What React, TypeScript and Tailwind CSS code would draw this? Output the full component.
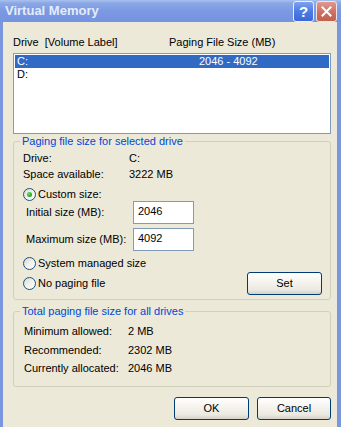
import React from "react";

function Radio({ checked }: { checked?: boolean }) {
  return (
    <span className="flex h-[13px] w-[13px] shrink-0 items-center justify-center rounded-full border border-[#1c5180] bg-[linear-gradient(135deg,#dcd9c8_0%,#f2f1ea_50%,#ffffff_100%)]">
      {checked && (
        <span className="h-[5px] w-[5px] rounded-full bg-[radial-gradient(circle_at_35%_35%,#6ee06a_0%,#21a121_70%,#1a8a1a_100%)]" />
      )}
    </span>
  );
}

function XPButton({ label, w = "w-[75px]" }: { label: string; w?: string }) {
  return (
    <div
      className={`flex h-[23px] ${w} items-center justify-center rounded-[3px] border border-[#003c74] bg-[linear-gradient(180deg,#ffffff_0%,#f5f4ef_40%,#ebe9e0_80%,#d6d0c5_100%)] text-[11px] text-black`}
    >
      {label}
    </div>
  );
}

function Input({ value }: { value: string }) {
  return (
    <div className="flex h-[23px] w-[61px] items-center border border-[#7f9db9] bg-white pb-[2px] pl-[4px] text-[11px] text-black">
      {value}
    </div>
  );
}

export default function App() {
  return (
    <div className="flex h-[427px] w-[341px] flex-col overflow-hidden bg-[#7a96df] font-['Liberation_Sans',Arial,sans-serif] text-[11px] leading-[13px] text-black">
      {/* Title bar */}
      <div className="flex h-[22px] shrink-0 items-center bg-[linear-gradient(180deg,#a9c1ee_0%,#8aa7e6_15%,#7b99e2_50%,#7594df_100%)] pl-[5px] pr-[4px]">
        <span className="text-[13px] font-bold leading-[16px] text-[#e4ecfb]">Virtual Memory</span>
        <div className="ml-auto flex gap-[2px]">
          <div className="flex h-[21px] w-[21px] items-center justify-center rounded-[3px] border border-[#e8eefb] bg-[linear-gradient(180deg,#7fa2ee_0%,#4d7be6_50%,#3c68d8_100%)] text-[15px] font-bold leading-none text-white">
            ?
          </div>
          <div className="flex h-[21px] w-[21px] items-center justify-center rounded-[3px] border border-[#f0e4e2] bg-[linear-gradient(180deg,#e09a8e_0%,#cf7364_50%,#c0604f_100%)]">
            <svg width="11" height="11" viewBox="0 0 11 11">
              <path d="M1.5 1.5 L9.5 9.5 M9.5 1.5 L1.5 9.5" stroke="white" strokeWidth="2" strokeLinecap="square" />
            </svg>
          </div>
        </div>
      </div>

      {/* Client */}
      <div className="ml-[3px] mr-[4px] flex flex-1 flex-col bg-[#ece9d8] pl-[10px] pr-[6px] pt-[14px]">
        {/* List header */}
        <div className="flex h-[13px]">
          <span className="w-[156px] whitespace-pre">Drive  [Volume Label]</span>
          <span>Paging File Size (MB)</span>
        </div>

        {/* Listbox */}
        <div className="mt-[4px] h-[81px] w-[318px] border border-[#7f9db9] bg-white p-[1px]">
          <div className="flex h-[13px] bg-[#316ac5] pl-[2px] text-white">
            <span className="w-[182px]">C:</span>
            <span>2046 - 4092</span>
          </div>
          <div className="flex h-[13px] pl-[2px]">
            <span>D:</span>
          </div>
        </div>

        {/* Group 1 */}
        <fieldset className="mt-[1px] w-[318px] rounded-[3px] border border-[#d0d0bf] pb-[4px] pl-[9px] pr-[8px]">
          <legend className="-ml-[3px] px-[2px] text-[#0046d5]">Paging file size for selected drive</legend>
          <div className="mt-[4px] flex h-[13px] items-center">
            <span className="w-[106px]">Drive:</span>
            <span>C:</span>
          </div>
          <div className="mt-[3px] flex h-[13px] items-center">
            <span className="w-[106px]">Space available:</span>
            <span>3222 MB</span>
          </div>
          <div className="mt-[7px] flex h-[13px] items-center gap-[2px]">
            <Radio checked />
            <span>Custom size:</span>
          </div>
          <div className="flex h-[23px] items-center pl-[3px]">
            <span className="w-[107px]">Initial size (MB):</span>
            <Input value="2046" />
          </div>
          <div className="mt-[4px] flex h-[23px] items-center pl-[3px]">
            <span className="w-[107px]">Maximum size (MB):</span>
            <Input value="4092" />
          </div>
          <div className="mt-[5px] flex h-[14px] items-center gap-[2px]">
            <Radio />
            <span>System managed size</span>
          </div>
          <div className="mt-[2px] flex h-[23px] items-center gap-[2px]">
            <Radio />
            <span>No paging file</span>
            <div className="ml-auto">
              <XPButton label="Set" />
            </div>
          </div>
        </fieldset>

        {/* Group 2 */}
        <fieldset className="mt-[5px] w-[318px] rounded-[3px] border border-[#d0d0bf] pb-[11px] pl-[10px]">
          <legend className="-ml-[4px] px-[2px] text-[#0046d5]">Total paging file size for all drives</legend>
          <div className="mt-[7px] flex h-[13px] items-center">
            <span className="w-[104px]">Minimum allowed:</span>
            <span>2 MB</span>
          </div>
          <div className="mt-[6px] flex h-[13px] items-center">
            <span className="w-[104px]">Recommended:</span>
            <span>2302 MB</span>
          </div>
          <div className="mt-[5px] flex h-[13px] items-center">
            <span className="w-[104px]">Currently allocated:</span>
            <span>2046 MB</span>
          </div>
        </fieldset>

        {/* Buttons */}
        <div className="mt-[10px] flex w-[318px] justify-end gap-[8px]">
          <XPButton label="OK" />
          <XPButton label="Cancel" w="w-[74px]" />
        </div>
      </div>
    </div>
  );
}
